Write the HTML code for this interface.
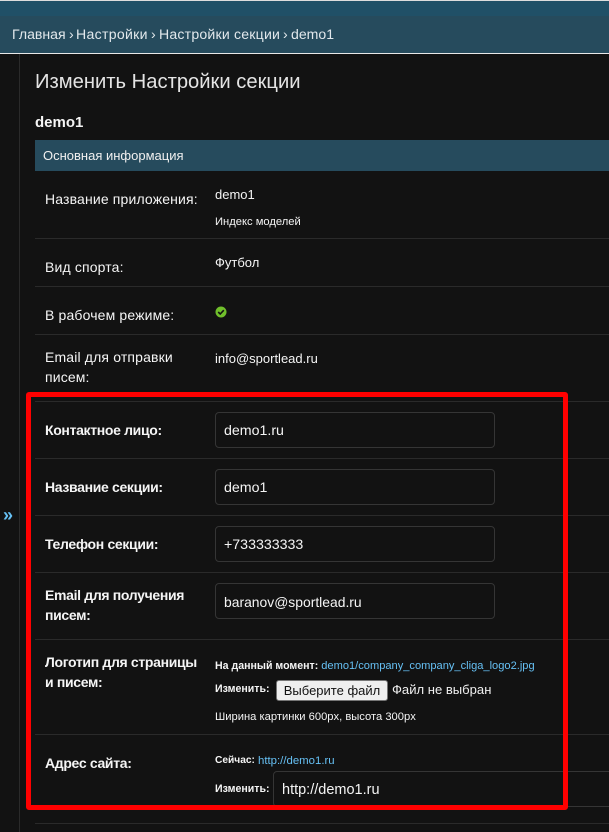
<!DOCTYPE html>
<html lang="ru"><head><meta charset="utf-8"><title>Изменить Настройки секции</title>
<style>
html,body{margin:0;padding:0;background:#121212}
body{position:relative;width:609px;height:832px;overflow:hidden;font-family:"Liberation Sans",Arial,sans-serif;color:#f5f5f5}
.a{position:absolute}
.t{position:absolute;white-space:nowrap;line-height:20px}
.l{position:absolute;left:35px;right:0;height:1px;background:#2a2a2a}
.lab{font-size:14px;left:45px;color:#f5f5f5;letter-spacing:.15px}
.lab.b{letter-spacing:-.33px}
.b{font-weight:bold;color:#f5f5f5}
.s{font-size:13px;left:215px;color:#f5f5f5}
.xs{font-size:10.6px;left:215px;color:#f5f5f5}
.in{position:absolute;left:215px;width:278px;height:34px;border:1px solid #353535;border-radius:4px}
.v{font-size:14.2px;left:224px;color:#f5f5f5}
.c{top:24px;font-size:14.1px;color:#e2e8ec}
a{color:#66c0f4;text-decoration:none}
</style></head><body>
<div class="a" style="left:0;top:0;width:609px;height:1px;background:#ddd"></div>
<div class="a" style="left:0;top:1px;width:609px;height:15px;background:#205067"></div>
<div class="a" style="left:0;top:16px;width:609px;height:37px;background:#264b5d"></div>
<div class="a" style="left:0;top:53px;width:609px;height:1px;background:#e8e8e8"></div>
<div class="t c" style="left:12px">Главная</div>
<div class="t c" style="left:69px">›</div>
<div class="t c" style="left:76px;letter-spacing:.3px">Настройки</div>
<div class="t c" style="left:151px">›</div>
<div class="t c" style="left:159px;letter-spacing:.2px">Настройки секции</div>
<div class="t c" style="left:283px">›</div>
<div class="t c" style="left:291px">demo1</div>
<div class="a" style="left:19px;top:54px;width:1px;height:778px;background:#2a2a2a"></div>
<div class="t" style="left:35px;top:72px;font-size:20.2px;color:#e4e4e4">Изменить Настройки секции</div>
<div class="t b" style="left:35px;top:113px;font-size:15px">demo1</div>
<div class="a" style="left:35px;top:140px;width:574px;height:31px;background:#264b5d"></div>
<div class="t" style="left:43px;top:146px;font-size:13px;color:#f0f0f0">Основная информация</div>

<div class="t lab" style="top:189px">Название приложения:</div>
<div class="t s" style="top:185px">demo1</div>
<div class="t xs" style="top:212px;font-size:11.2px">Индекс моделей</div>
<div class="l" style="top:238px"></div>
<div class="t lab" style="top:257px">Вид спорта:</div>
<div class="t s" style="top:253px">Футбол</div>
<div class="l" style="top:286px"></div>
<div class="t lab" style="top:305px">В рабочем режиме:</div>
<svg class="a" style="left:215px;top:306px" width="12" height="12" viewBox="0 0 12 12"><circle cx="6" cy="6" r="5.5" fill="#70bf2b"/><path d="M3.2 6l2 2 3.6-3.8" fill="none" stroke="#121212" stroke-width="1.6"/></svg>
<div class="l" style="top:334px"></div>
<div class="t lab" style="top:347px">Email для отправки</div>
<div class="t lab" style="top:367px">писем:</div>
<div class="t s" style="top:349px">info@sportlead.ru</div>
<div class="l" style="top:401px"></div>

<div class="t lab b" style="top:420px">Контактное лицо:</div>
<div class="in" style="top:412px"></div>
<div class="t v" style="top:421px">demo1.ru</div>
<div class="l" style="top:458px"></div>
<div class="t lab b" style="top:477px">Название секции:</div>
<div class="in" style="top:469px"></div>
<div class="t v" style="top:478px">demo1</div>
<div class="l" style="top:515px"></div>
<div class="t lab b" style="top:534px">Телефон секции:</div>
<div class="in" style="top:526px"></div>
<div class="t v" style="top:535px">+733333333</div>
<div class="l" style="top:572px"></div>
<div class="t lab b" style="top:585px">Email для получения</div>
<div class="t lab b" style="top:605px">писем:</div>
<div class="in" style="top:583px"></div>
<div class="t v" style="top:592px;font-size:13.9px">baranov@sportlead.ru</div>
<div class="l" style="top:639px"></div>

<div class="t lab b" style="top:652px">Логотип для страницы</div>
<div class="t lab b" style="top:672px">и писем:</div>
<div class="t xs" style="top:656px"><b>На данный момент:</b> <a href="#" style="font-size:11.1px">demo1/company_company_cliga_logo2.jpg</a></div>
<div class="t xs" style="top:679px"><b>Изменить:</b></div>
<div class="a" style="left:276px;top:680px;width:110px;height:19px;background:#efefef;border:1px solid #767676;border-radius:3px;color:#111;font-size:13px;line-height:19px;text-align:center;white-space:nowrap">Выберите файл</div>
<div class="t" style="left:392px;top:680px;font-size:13.07px;color:#f0f0f0">Файл не выбран</div>
<div class="t xs" style="top:707px;font-size:11.2px">Ширина картинки 600px, высота 300px</div>
<div class="l" style="top:734px"></div>

<div class="t lab b" style="top:753px">Адрес сайта:</div>
<div class="t xs" style="top:751px;font-size:10.2px"><b>Сейчас:</b></div>
<a class="t" href="#" style="left:258px;top:751px;font-size:11.4px">http://demo1.ru</a>
<div class="t xs" style="top:779px"><b>Изменить:</b></div>
<div class="a" style="left:273px;top:771px;width:340px;height:34px;border:1px solid #353535;border-radius:4px"></div>
<div class="t" style="left:282px;top:780px;font-size:14.5px;color:#f5f5f5">http://demo1.ru</div>
<div class="l" style="top:823px"></div>

<div class="t" style="left:3px;top:505px;font-size:18px;font-weight:bold;color:#66c0f4">»</div>
<div class="a" style="left:26px;top:392px;width:532px;height:408px;border:5px solid #ff0000;border-radius:3px"></div>
</body></html>
